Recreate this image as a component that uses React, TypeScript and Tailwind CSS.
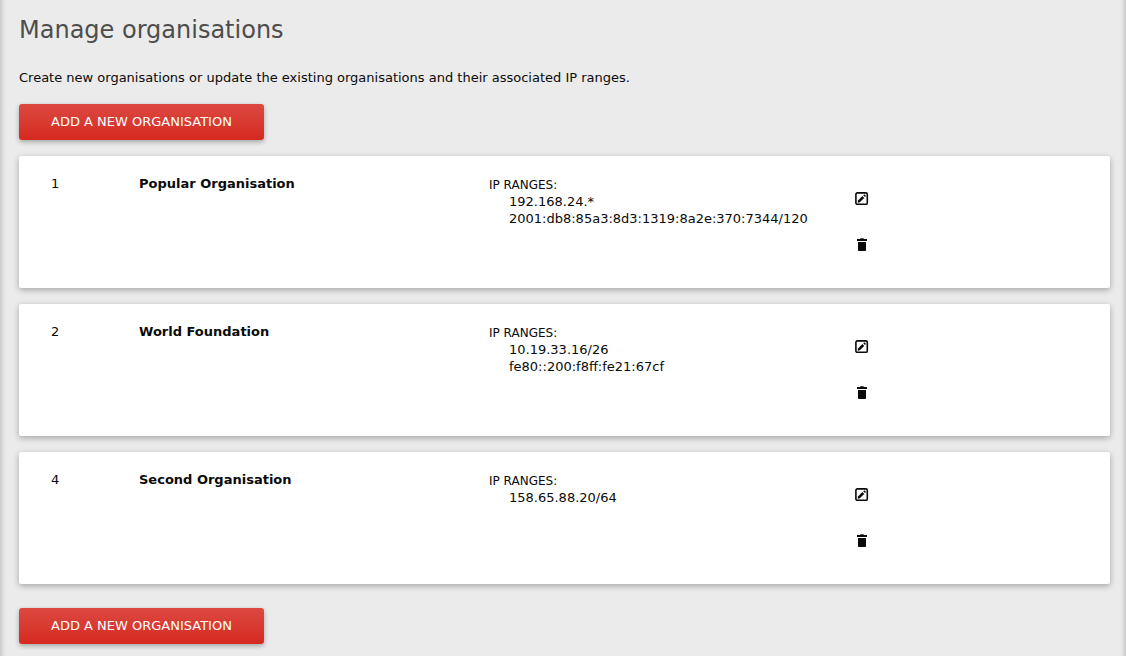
type Organisation = { id: number; name: string; ranges: string[] };

const organisations: Organisation[] = [
  {
    id: 1,
    name: "Popular Organisation",
    ranges: ["192.168.24.*", "2001:db8:85a3:8d3:1319:8a2e:370:7344/120"],
  },
  { id: 2, name: "World Foundation", ranges: ["10.19.33.16/26", "fe80::200:f8ff:fe21:67cf"] },
  { id: 4, name: "Second Organisation", ranges: ["158.65.88.20/64"] },
];

function EditIcon() {
  return (
    <svg width="14" height="14" viewBox="0 0 14 14" fill="none" aria-hidden="true">
      <rect x="0.9" y="0.9" width="11.4" height="11.4" rx="1.4" stroke="#0a0a0a" strokeWidth="1.6" />
      <path d="M2.6 10.7 3 8.5 7.4 4.1 9.2 5.9 4.8 10.3Z" fill="#0a0a0a" />
      <path d="M8.3 3.3 9 2.6Q9.4 2.3 9.8 2.6L10.7 3.5Q11 3.9 10.7 4.3L10 5Z" fill="#0a0a0a" />
    </svg>
  );
}

function TrashIcon() {
  return (
    <svg width="14" height="14" viewBox="0 0 14 14" fill="#0a0a0a" aria-hidden="true">
      <path d="M2 1H5L5.6 0.2H8.4L9 1H12V3H2Z" />
      <path d="M3 3.9H11V12.2Q11 13 10.2 13H3.8Q3 13 3 12.2Z" />
    </svg>
  );
}

function AddButton() {
  return (
    <button
      type="button"
      className="h-9 self-start rounded-[3px] bg-linear-to-b from-[#dc4840] to-[#d5291f] px-8 text-[13px] text-white uppercase shadow-[0_2px_5px_rgba(0,0,0,0.3)]"
    >
      Add a new organisation
    </button>
  );
}

function OrganisationCard({ organisation }: { organisation: Organisation }) {
  return (
    <li className="flex min-h-33 rounded-xs bg-white px-8 pt-5 pb-8 shadow-[0_2px_6px_rgba(0,0,0,0.3)]">
      <span className="w-22 shrink-0 leading-4">{organisation.id}</span>
      <h2 className="w-[350px] shrink-0 leading-4 font-bold">{organisation.name}</h2>
      <div className="w-[366px] shrink-0">
        <h3 className="pt-px text-xs leading-4 uppercase">IP ranges:</h3>
        <ul className="pl-5 leading-[17px]">
          {organisation.ranges.map((range) => (
            <li key={range}>{range}</li>
          ))}
        </ul>
      </div>
      <div className="flex flex-col items-start gap-8 pt-4">
        <button type="button" aria-label={`Edit ${organisation.name}`}>
          <EditIcon />
        </button>
        <button type="button" aria-label={`Delete ${organisation.name}`}>
          <TrashIcon />
        </button>
      </div>
    </li>
  );
}

export default function App() {
  return (
    <main className="flex min-h-screen flex-col bg-[#ebebeb] pt-3 pr-4 pb-3 pl-[19px] font-['Verdana','DejaVu_Sans',sans-serif] text-[13px] text-[#0a0a0a] shadow-[inset_8px_0_6px_-8px_rgba(0,0,0,0.3),inset_-8px_0_6px_-8px_rgba(0,0,0,0.3)]">
      <h1 className="text-2xl leading-9 text-[#4d4d4d]">Manage organisations</h1>
      <p className="mt-5 mb-4 leading-5">
        Create new organisations or update the existing organisations and their associated IP ranges.
      </p>
      <AddButton />
      <ul className="mt-4 mb-6 flex flex-col gap-4">
        {organisations.map((organisation) => (
          <OrganisationCard key={organisation.id} organisation={organisation} />
        ))}
      </ul>
      <AddButton />
    </main>
  );
}
